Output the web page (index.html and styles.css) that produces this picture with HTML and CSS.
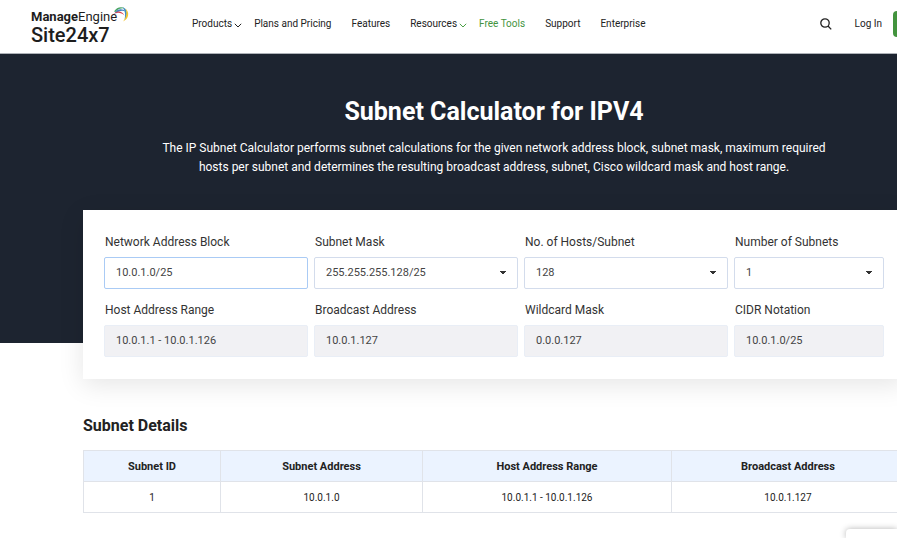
FILE: index.html
```html
<!DOCTYPE html>
<html lang="en">
<head>
<meta charset="utf-8">
<meta name="viewport" content="width=device-width, initial-scale=1">
<title>Subnet Calculator for IPV4</title>
<link rel="stylesheet" href="styles.css">
</head>
<body>
<header class="site-header">
  <a class="logo" href="#">
    <span class="logo-parent"><b>Manage</b>Engine</span>
    <span class="logo-product">Site24x7</span>
    <svg class="logo-arcs" viewBox="0 0 18 17" width="18" height="17" aria-hidden="true">
      <path d="M2 5.500C4.500 1.200 9.500 0 13 2.500C10 2 6 2.500 3.500 6Z" fill="#4aa564"/>
      <path d="M3 6.500C5.500 2.500 10.500 2 13.500 5.500C10.500 4 7 4.500 4 7.500Z" fill="#3f7fc1"/>
      <path d="M1.500 8C4.500 4.500 10 4.500 12.500 9.500C9.500 6.500 5.500 6 1.500 8Z" fill="#d8434e"/>
      <path d="M10.500 1.200C15.500 2.500 16.500 9 12.500 14C13.500 9 13.500 5 10.500 1.200Z" fill="#3f8fc4"/>
      <path d="M13.500 2.500C17.800 6 17 13 11 15.500C14.500 11.500 15.300 7 13.500 2.500Z" fill="#f3c52f"/>
    </svg>
  </a>
  <nav class="main-nav" aria-label="Main">
    <a class="has-menu" href="#">Products<svg viewBox="0 0 8 5" width="8" height="5" aria-hidden="true"><path d="M.8.8 4 4 7.200.8"/></svg></a>
    <a href="#">Plans and Pricing</a>
    <a href="#">Features</a>
    <a class="has-menu green-menu" href="#">Resources<svg viewBox="0 0 8 5" width="8" height="5" aria-hidden="true"><path d="M.8.8 4 4 7.200.8"/></svg></a>
    <a class="current" href="#">Free Tools</a>
    <a href="#">Support</a>
    <a href="#">Enterprise</a>
  </nav>
  <div class="account">
    <button class="search" type="button" aria-label="Search"><svg viewBox="0 0 12 12" width="12" height="12" aria-hidden="true"><circle cx="5" cy="5" r="4.200"/><path d="m8 8 3.200 3.400"/></svg></button>
    <a class="login" href="#">Log In</a>
    <button class="signup" type="button" aria-label="Sign Up"></button>
  </div>
</header>
<main>
  <section class="hero">
    <h1>Subnet Calculator for IPV4</h1>
    <p>The IP Subnet Calculator performs subnet calculations for the given network address block, subnet mask, maximum required hosts per subnet and determines the resulting broadcast address, subnet, Cisco wildcard mask and host range.</p>
  </section>
  <form class="calculator">
    <div class="field"><label for="block">Network Address Block</label><input class="active" id="block" type="text" value="10.0.1.0/25"></div>
    <div class="field"><label for="mask">Subnet Mask</label><select id="mask"><option>255.255.255.128/25</option></select></div>
    <div class="field"><label for="hosts">No. of Hosts/Subnet</label><select id="hosts"><option>128</option></select></div>
    <div class="field"><label for="subnets">Number of Subnets</label><select id="subnets"><option>1</option></select></div>
    <div class="field"><label for="range">Host Address Range</label><input id="range" type="text" value="10.0.1.1 - 10.0.1.126" readonly></div>
    <div class="field"><label for="broadcast">Broadcast Address</label><input id="broadcast" type="text" value="10.0.1.127" readonly></div>
    <div class="field"><label for="wildcard">Wildcard Mask</label><input id="wildcard" type="text" value="0.0.0.127" readonly></div>
    <div class="field"><label for="cidr">CIDR Notation</label><input id="cidr" type="text" value="10.0.1.0/25" readonly></div>
  </form>
  <section class="details">
    <h2>Subnet Details</h2>
    <table>
      <colgroup><col class="col-id"><col class="col-address"><col class="col-range"><col></colgroup>
      <thead><tr><th>Subnet ID</th><th>Subnet Address</th><th>Host Address Range</th><th>Broadcast Address</th></tr></thead>
      <tbody><tr><td>1</td><td>10.0.1.0</td><td>10.0.1.1 - 10.0.1.126</td><td>10.0.1.127</td></tr></tbody>
    </table>
  </section>
</main>
<aside class="chat" aria-label="Chat"></aside>
</body>
</html>
```
FILE: styles.css
```css
* { box-sizing: border-box; }
html { overflow: hidden; }
body {
  margin: 0;
  min-width: 988px;
  background: #fff;
  color: #222;
  font-family: Roboto, "Liberation Sans", sans-serif;
  font-size: 12px;
}
a { color: inherit; text-decoration: none; }

.site-header {
  display: flex;
  align-items: center;
  height: 54px;
  padding: 0 31px;
  border-bottom: 1px solid #aeb2b8;
}
.logo { position: relative; display: flex; flex-direction: column; width: 161px; color: #1d1d1d; }
.logo-parent { font-size: 13px; line-height: 16px; }
.logo-product { font-size: 20px; line-height: 20px; font-weight: 500; }
.logo-arcs { position: absolute; left: 81px; top: -3px; }

.main-nav { display: flex; align-items: center; gap: 20px; margin-top: -6px; font-size: 10px; line-height: 16px; white-space: nowrap; }
.has-menu { display: flex; align-items: center; gap: 2px; margin-right: -8px; }
.has-menu svg { margin-top: 3px; }
.has-menu path { fill: none; stroke: #222; }
.green-menu path { stroke: #4ba046; }
.current { color: #43943e; }

.account { display: flex; align-items: center; gap: 11px; margin-left: auto; margin-top: -6px; font-size: 10px; }
.search { display: flex; margin-right: 12px; padding: 0; border: 0; background: none; }
.search svg { fill: none; stroke: #222; stroke-width: 1.3; }
.signup { width: 64px; height: 26px; border: 0; border-radius: 4px; background: #43943e; }

.hero { height: 289px; padding: 42px 160px 0; background: #1d2430; color: #fff; text-align: center; }
h1 { margin: 0 0 12px; font-size: 25px; line-height: 31px; font-weight: 700; }
.hero p { margin: 0; font-size: 12px; line-height: 19px; }

.calculator {
  display: grid;
  grid-template-columns: 204fr 204fr 204fr 150fr;
  gap: 11px 6px;
  margin: -133px 83px 0;
  padding: 22px 21px;
  background: #fff;
  box-shadow: 0 6px 24px rgba(0, 0, 0, .1);
}
.field { display: flex; flex-direction: column; gap: 5px; min-width: 0; }
.field label { padding-left: 1px; line-height: 20px; color: #333; }
.field input, .field select {
  width: 100%;
  height: 32px;
  padding: 0 11px 1px;
  border: 1px solid #d3dcec;
  border-radius: 2px;
  outline: 0;
  background: #fff;
  color: #444;
  font: 11px Roboto, "Liberation Sans", sans-serif;
}
.field input.active { border-color: #aacbf5; }
.field input[readonly] { border-color: #e9eef6; background: #f1f1f4; }
.field select {
  appearance: none;
  background: linear-gradient(to bottom right, #333 50%, transparent 50%) right 11px center / 3px 4px no-repeat,
    linear-gradient(to bottom left, #333 50%, transparent 50%) right 14px center / 3px 4px no-repeat, #fff;
}

.details { margin: 35px 83px 0; }
h2 { margin: 0 0 12px; font-size: 16px; line-height: 24px; font-weight: 700; }
table { width: 100%; border-collapse: collapse; table-layout: fixed; text-align: center; }
.col-id { width: 137px; }
.col-address { width: 202px; }
.col-range { width: 249px; }
th, td { height: 31px; padding: 0; border: 1px solid #e0e3e9; }
th { background: #ebf3ff; font-size: 11px; font-weight: 700; }
td { font-size: 10px; }

.chat { position: fixed; right: 0; bottom: 0; width: 51px; height: 9px; border-radius: 4px 0 0; background: #fff; box-shadow: 0 0 6px rgba(0, 0, 0, .3); }
```
